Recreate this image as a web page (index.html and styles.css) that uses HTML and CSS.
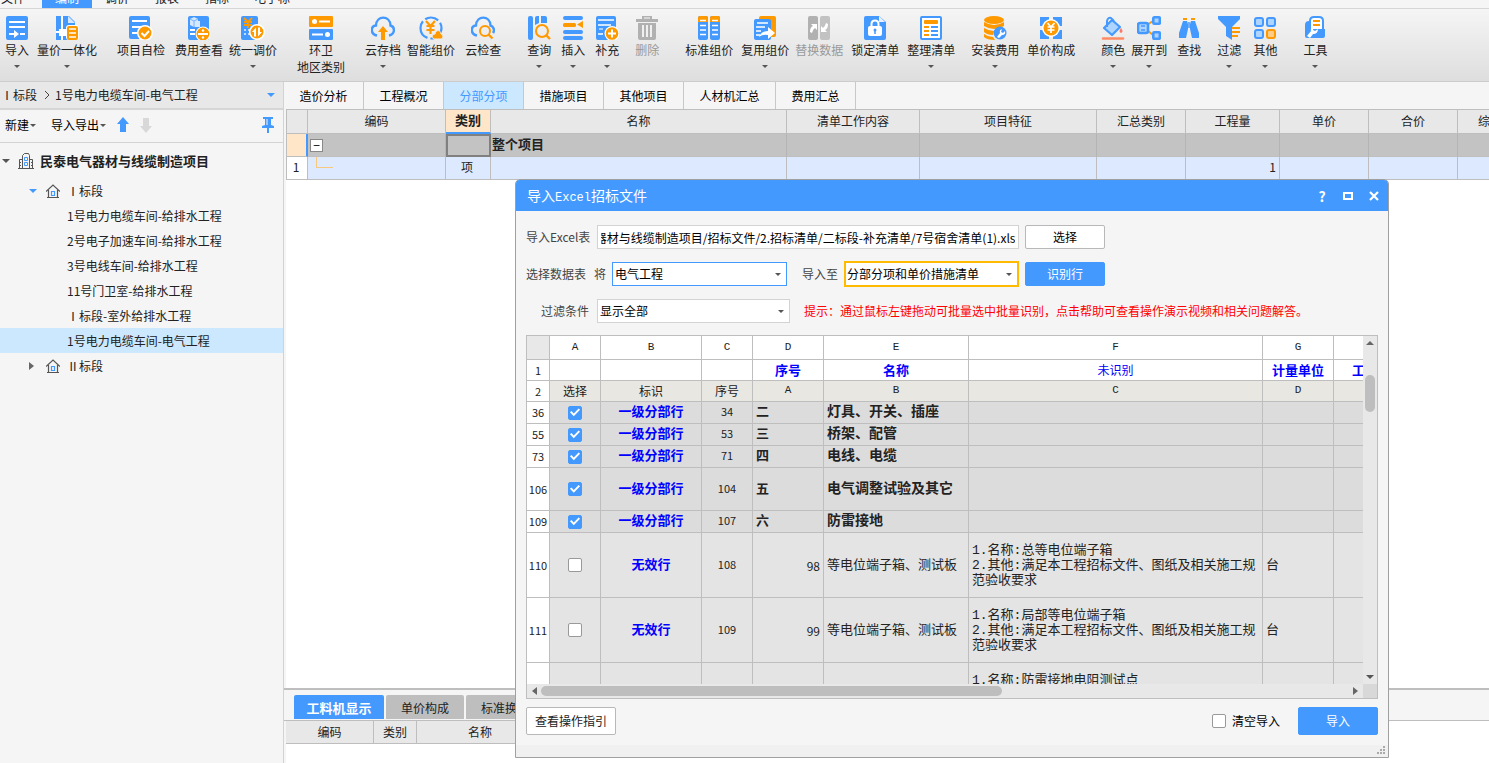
FILE: index.html
```html
<!DOCTYPE html>
<html lang="zh-CN">
<head>
<meta charset="utf-8">
<title>导入Excel招标文件</title>
<link rel="stylesheet" href="styles.css">
</head>
<body>
<div class="app">
  <nav class="menu">
    <a href="#">文件·</a><a href="#" class="active">编制</a><a href="#">调价</a><a href="#">报表</a><a href="#">指标</a><a href="#">电子标</a>
  </nav>

  <div class="ribbon">
    <button class="tool drop"><svg viewBox="0 0 24 24"><rect x="1" width="22" height="24" rx="2" fill="#49f"/><path d="M4 6h16M4 11h16M15 18h5" stroke="#fff" stroke-width="2"/><path d="M4 17h5v-3l5 4-5 4v-3H4z" fill="#fff"/></svg><span>导入</span></button>
    <button class="tool drop gap-s"><svg viewBox="0 0 24 24"><path d="M1 0h13l6 6v18H1z" fill="#49f"/><path d="M13 0l7 7h-7z" fill="#d5e8ff"/><path d="M7 0v24M1 16h11" stroke="#fff" stroke-width="2"/><rect x="4" y="13" width="7" height="7" fill="#fff"/><rect x="11" y="9" width="13" height="15" rx="3" fill="#fff"/><rect x="12" y="10" width="11" height="14" rx="2" fill="#f90"/><path d="M14 13h7M14 17h7M14 21h7" stroke="#fff" stroke-width="1.6"/></svg><span>量价一体化</span></button>
    <button class="tool gap-xl"><svg viewBox="0 0 24 24"><rect x="0" width="21" height="23" rx="2" fill="#49f"/><path d="M3 5h15M3 11h9M3 17h5" stroke="#fff" stroke-width="2"/><circle cx="16" cy="17" r="8" fill="#fff"/><circle cx="16" cy="17" r="6.5" fill="#f90"/><path d="M12.500 17l3 3 4.500-5" fill="none" stroke="#fff" stroke-width="2"/></svg><span>项目自检</span></button>
    <button class="tool gap-m"><svg viewBox="0 0 24 24"><rect x="1" width="21" height="24" rx="2" fill="#49f"/><path d="M3 3l4-2 4 2v6l-4 2-4-2zM8 5h5v6H8z" fill="#d5e8ff"/><path d="M3 3l4 2 4-2M7 5v6" stroke="#76b4ff" fill="none"/><path d="M3 14h5M3 18h5" stroke="#fff" stroke-width="2"/><circle cx="16" cy="18" r="7.500" fill="#fff"/><circle cx="16" cy="18" r="6.500" fill="#f90"/><path d="M11 18h10" stroke="#fff" stroke-width="2"/><circle cx="16" cy="14.500" r="1.200" fill="#fff"/><circle cx="16" cy="21.500" r="1.200" fill="#fff"/></svg><span>费用查看</span></button>
    <button class="tool drop gap-xs"><svg viewBox="0 0 24 24"><rect x="0" width="17" height="24" rx="2" fill="#49f"/><path d="M3 2l4 4 4-4M7 6v6M3 6h8M3 9h8" stroke="#f90" stroke-width="1.800" fill="none"/><path d="M3 14h2M7 14h3M3 18h2M7 18h2" stroke="#bfdcff" stroke-width="2"/><circle cx="16" cy="16" r="8" fill="#fff"/><circle cx="16" cy="16" r="6.500" fill="#f90"/><path d="M11 16l4-4.500v9h-2v-4.500zM21 16l-4 4.500v-9h2v4.500z" fill="#fff"/></svg><span>统一调价</span></button>
    <button class="tool gap-xl"><svg viewBox="0 0 24 24"><rect width="24" height="11" rx="1" fill="#f90"/><rect y="13" width="24" height="11" rx="1" fill="#49f"/><circle cx="5.500" cy="5.500" r="2.500" fill="#fff"/><path d="M10 5.500h11M3 18.500h11" stroke="#fff" stroke-width="2"/><circle cx="18.500" cy="18.500" r="2.500" fill="#fff"/></svg><span>环卫<br>地区类别</span></button>
    <button class="tool drop gap-xl"><svg viewBox="0 0 24 24"><path d="M6 19.500C-1 18-.5 10 5 9.500 5.500-1 19-1 19.500 9.500 24.500 11 24 18.500 18 19.500" fill="none" stroke="#49f" stroke-width="2.400"/><path d="M12 10l5 6h-3v8h-4v-8H7z" fill="#f90"/></svg><span>云存档</span></button>
    <button class="tool gap-xs"><svg viewBox="0 0 24 24"><circle cx="12" cy="12" r="10.500" fill="none" stroke="#49f" stroke-width="2.200" stroke-dasharray="17 3 20 3 14 3"/><path d="M7 5l4.500 5L16 5M11.500 10v8M7.500 10h8M7.500 14h8" stroke="#f90" stroke-width="2.200" fill="none"/><path d="M15 23c-3-1-2-5 1-5 1-5 6-4 6 0 3 1 2 5 0 5z" fill="#f90" stroke="#eee"/></svg><span>智能组价</span></button>
    <button class="tool gap-m"><svg viewBox="0 0 24 24"><path d="M6 19.500C-1 18-.5 10 5 9.500 5.500-1 19-1 19.500 9.500 22.500 10.500 24 14 22 17" fill="none" stroke="#49f" stroke-width="2.400"/><circle cx="14" cy="15" r="5" fill="none" stroke="#f90" stroke-width="2"/><path d="M17.500 18.500l4 4" stroke="#f90" stroke-width="2.400"/></svg><span>云检查</span></button>
    <button class="tool drop gap-xxl"><svg viewBox="0 0 24 24"><rect x="1" width="5" height="24" rx="2" fill="#49f"/><path d="M8 2q0-2 2-2h2v7l-4 2zM14 0h4q2 0 2 2v5h-6z" fill="#49f"/><circle cx="15" cy="15" r="6" fill="none" stroke="#f90" stroke-width="2"/><path d="M19 19l4 4" stroke="#f90" stroke-width="2.400"/></svg><span>查询</span></button>
    <button class="tool drop gap-m"><svg viewBox="0 0 24 24"><rect x="2" width="20" height="4" rx="2" fill="#49f"/><rect x="2" y="7" width="13" height="4" rx="1.500" fill="#f90"/><path d="M22 5v7l-6-3.500z" fill="#f90"/><rect x="2" y="14" width="20" height="4" rx="2" fill="#49f"/><rect x="2" y="20" width="20" height="4" rx="2" fill="#49f"/></svg><span>插入</span></button>
    <button class="tool drop gap-m"><svg viewBox="0 0 24 24"><rect x="1" width="20" height="24" rx="2" fill="#49f"/><path d="M3 4h16M3 9h13M3 18h5" stroke="#fff" stroke-width="1.600"/><path d="M4 13h4" stroke="#bfdcff" stroke-width="1.600"/><circle cx="17" cy="17.500" r="7.500" fill="#fff"/><circle cx="17" cy="17.500" r="6.300" fill="#f90"/><path d="M13 17.500h8M17 13.500v8" stroke="#fff" stroke-width="2"/></svg><span>补充</span></button>
    <button class="tool gap-n" disabled><svg viewBox="0 0 24 24"><path d="M1 3h6V0h10v3h6v3H1zM3 7h18v15q0 2-2 2H5q-2 0-2-2z" fill="#b1b1b1"/><path d="M9 2h6" stroke="#eee" stroke-width="1.200"/><path d="M8 9v12M12 9v12M16 9v12" stroke="#f0f0f0" stroke-width="2"/></svg><span>删除</span></button>
    <button class="tool gap-xxl"><svg viewBox="0 0 24 24"><rect x="1" width="10" height="24" rx="2" fill="#49f"/><rect x="13" width="10" height="24" rx="2" fill="#49f"/><path d="M1 6V2q0-2 2-2h6q2 0 2 2v4zM13 6V2q0-2 2-2h6q2 0 2 2v4z" fill="#f90"/><path d="M3 4.500h6M15 4.500h6M3 9.500h6M15 9.500h6M3 14h6M15 14h6M3 18.500h6M15 18.500h6" stroke="#fff" stroke-width="1.600"/></svg><span>标准组价</span></button>
    <button class="tool drop gap-s"><svg viewBox="0 0 24 24"><rect x="6" width="17" height="21" rx="2" fill="#f90"/><rect x="1" y="3" width="17" height="21" rx="2" fill="#49f"/><path d="M4 7h11M3 11h9M3 15h5M3 19h4" stroke="#fff" stroke-width="1.600"/><path d="M6 21q2-6 9-6v-4l7 6-7 6v-4q-5-1-9 2z" fill="#fff"/></svg><span>复用组价</span></button>
    <button class="tool gap-xs" disabled><svg viewBox="0 0 24 24"><rect x="1" width="10" height="24" rx="2" fill="#b1b1b1"/><rect x="13" width="10" height="24" rx="2" fill="#c2c2c2"/><path d="M3 16q0-5 3-6L4 8h6v6l-2-2q-2 1-3 5zM21 8q0 5-3 6l2 2h-6v-6l2 2q2-1 3-5z" fill="#fff"/></svg><span>替换数据</span></button>
    <button class="tool gap-s"><svg viewBox="0 0 24 24"><path d="M1 2q0-2 2-2h13l7 6v16q0 2-2 2H3q-2 0-2-2z" fill="#49f"/><path d="M16 0l6 6h-6z" fill="#e8f2ff"/><path d="M8.500 11V8q0-3.500 3.500-3.500T15.500 8v3" fill="none" stroke="#fff" stroke-width="2"/><rect x="5" y="10" width="14" height="10" rx="2" fill="#fff"/><circle cx="12" cy="14" r="1.500" fill="#49f"/><path d="M12 14v4" stroke="#49f" stroke-width="1.500"/></svg><span>锁定清单</span></button>
    <button class="tool drop gap-s"><svg viewBox="0 0 24 24"><rect x="2" y="1" width="20" height="22" rx="1" fill="#fff" stroke="#49f" stroke-width="2"/><rect x="5" y="4" width="14" height="4" rx="1" fill="#f90"/><path d="M5 11h5M5 15h5M5 19h5" stroke="#f90" stroke-width="1.800"/><path d="M12 11h7M12 15h7M12 19h7" stroke="#49f" stroke-width="1.800"/></svg><span>整理清单</span></button>
    <button class="tool drop gap-n"><svg viewBox="0 0 24 24"><ellipse cx="11" cy="4" rx="10" ry="4" fill="#f90"/><path d="M1 6q10 6 20 0v4q-10 6-20 0zM1 12q5 3 10 3l-1 4q-6 0-9-3zM1 18q4 3 9 3l2 3q-8 0-11-3z" fill="#f90"/><circle cx="17" cy="17" r="6.500" fill="#49f"/><path d="M14 21l3-4q-1-3 2-4l-1 3 2 1 2-2q1 4-3 4l-3 3z" fill="#fff"/></svg><span>安装费用</span></button>
    <button class="tool gap-s"><svg viewBox="0 0 24 24"><path d="M1 1h9v9H1zM14 1h9v9h-9zM1 14h9v9H1zM14 14h9v9h-9z" fill="#49f"/><circle cx="12" cy="12" r="9" fill="#fff"/><circle cx="12" cy="12" r="7.500" fill="#f90"/><path d="M8.500 7l3.500 4 3.500-4M12 11v6M8.500 11h7M8.500 14h7" fill="none" stroke="#fff" stroke-width="1.700"/></svg><span>单价构成</span></button>
    <button class="tool drop gap-xxl"><svg viewBox="0 0 24 24"><path d="M3 12L11 4l8 7-8 8z" fill="#add5ff" stroke="#49f" stroke-width="2.200" stroke-linejoin="round"/><path d="M6 11V5q1-4 4-3l3 3" fill="none" stroke="#49f" stroke-width="2"/><path d="M20 12q3 4 0 5-3-1 0-5z" fill="#f76"/><path d="M2 22.500h20" stroke="#ff8a66" stroke-width="2.600" stroke-linecap="round"/></svg><span>颜色</span></button>
    <button class="tool drop gap-xs"><svg viewBox="0 0 24 24"><path d="M10 9l6-4M10 14l6 5" stroke="#f90" stroke-width="2"/><rect x="1" y="7" width="10" height="10" rx="2" fill="#add5ff" stroke="#49f" stroke-width="2.600"/><path d="M4 10h4M4 14h4" stroke="#49f" stroke-width="1.500"/><rect x="16.300" y="1.300" width="6.500" height="6.500" rx="1" fill="#add5ff" stroke="#49f" stroke-width="2.600"/><rect x="16.300" y="16.300" width="6.500" height="6.500" rx="1" fill="#add5ff" stroke="#49f" stroke-width="2.600"/></svg><span>展开到</span></button>
    <button class="tool gap-m"><svg viewBox="0 0 24 24"><path d="M6 5h4l1 3v5l-2 9H2v-5zM14 5h4l4 12v5h-7l-2-9V8z" fill="#49f"/><path d="M6 3h4M14 3h4" stroke="#f90" stroke-width="2"/><path d="M12 6v6" stroke="#49f" stroke-width="1.500"/></svg><span>查找</span></button>
    <button class="tool drop gap-n"><svg viewBox="0 0 24 24"><path d="M1 0h22v3l-8 8v13l-6-4v-9L1 3z" fill="#49f"/><path d="M15 12h8M15 16h8M15 20h6" stroke="#f90" stroke-width="2"/></svg><span>过滤</span></button>
    <button class="tool drop gap-l"><svg viewBox="0 0 24 24"><g fill="#add5ff" stroke="#49f" stroke-width="2"><rect x="2" y="2" width="8" height="8" rx="2"/><rect x="14" y="2" width="8" height="8" rx="2"/><rect x="2" y="14" width="8" height="8" rx="2"/></g><rect x="14" y="14" width="8" height="8" rx="2" fill="#fc8" stroke="#f90" stroke-width="2"/></svg><span>其他</span></button>
    <button class="tool drop gap-xxl"><svg viewBox="0 0 24 24"><path d="M7 5q0-4 4-4h5q4 0 4 4v9H7z" fill="#fff" stroke="#49f" stroke-width="2"/><path d="M10 5h7M10 9h7" stroke="#f90" stroke-width="1.800"/><path d="M2 9q0-4 4-4v8h16v7q0 2-2 2H4q-2 0-2-2z" fill="#49f"/><path d="M4 20l4-5q-1-4 3-5l-1 4 2 1 3-2q0 5-5 5l-3 4z" fill="#fff"/></svg><span>工具</span></button>
  </div>

  <div class="workspace">
    <aside class="sidebar">
      <div class="path"><span>Ⅰ标段</span><svg class="chevron" viewBox="0 0 6 10"><path d="M1 1l4 4-4 4" fill="none" stroke="#444"/></svg><span>1号电力电缆车间-电气工程</span><i class="tri blue push"></i></div>
      <div class="side-tools">
        <button>新建<i class="tri small"></i></button>
        <button>导入导出<i class="tri small"></i></button>
        <button aria-label="上移"><svg class="arrow" viewBox="0 0 12 16"><path d="M6 0l6 7H9v8H3V7H0z" fill="#49f"/></svg></button>
        <button aria-label="下移" disabled><svg class="arrow" viewBox="0 0 12 16"><path d="M6 16l6-7H9V1H3v8H0z" fill="#d8d8d8"/></svg></button>
        <button class="push" aria-label="固定"><svg class="arrow" viewBox="0 0 12 16"><path d="M1 0h10v2H9v6l3 1v2H7v5H5v-5H0V9l3-1V2H1z" fill="#49f"/><path d="M5 2v6" stroke="#f5f5f5"/></svg></button>
      </div>
      <ul class="tree">
        <li class="root"><i class="tri"></i><svg class="building" viewBox="0 0 16 16"><g fill="none" stroke="#555"><path d="M0 15.500h16M1.500 15V6.500h3M4.500 15V2.500l2-2h4l1 2V15M11.500 6.500h3V15"/><path d="M2 9.500h1M2 12.500h1M13 9.500h1M13 12.500h1"/></g><path d="M6.500 4.500h3v3h-3zM6.500 9.500h3v3h-3z" fill="none" stroke="#49f"/></svg>民泰电气器材与线缆制造项目</li>
        <li class="branch"><i class="tri blue"></i><svg class="house" viewBox="0 0 14 14"><path d="M0 7.500L7 1l7 6.500M2.500 6v7.500h9V6M1 13.500h12" fill="none" stroke="#555" stroke-width="1.200"/><path d="M5.500 7.500h3v4h-3z" fill="none" stroke="#49f" stroke-width="1.200"/></svg>Ⅰ标段</li>
        <li class="leaf">1号电力电缆车间-给排水工程</li>
        <li class="leaf">2号电子加速车间-给排水工程</li>
        <li class="leaf">3号电线车间-给排水工程</li>
        <li class="leaf">11号门卫室-给排水工程</li>
        <li class="leaf">Ⅰ标段-室外给排水工程</li>
        <li class="leaf selected">1号电力电缆车间-电气工程</li>
        <li class="branch"><i class="tri closed"></i><svg class="house" viewBox="0 0 14 14"><path d="M0 7.500L7 1l7 6.500M2.500 6v7.500h9V6M1 13.500h12" fill="none" stroke="#555" stroke-width="1.200"/><path d="M5.500 7.500h3v4h-3z" fill="none" stroke="#49f" stroke-width="1.200"/></svg>Ⅱ标段</li>
      </ul>
    </aside>

    <main class="main">
      <nav class="tabs"><a href="#">造价分析</a><a href="#">工程概况</a><a href="#" class="active">分部分项</a><a href="#">措施项目</a><a href="#">其他项目</a><a href="#" class="wide">人材机汇总</a><a href="#">费用汇总</a></nav>
      <div class="grid-area">
        <table class="grid items">
          <colgroup><col class="w22"><col class="w138"><col class="w45"><col class="w296"><col class="w133"><col class="w177"><col class="w89"><col class="w94"><col class="w89"><col class="w89"><col class="w89"></colgroup>
          <tr><th></th><th>编码</th><th class="current">类别</th><th>名称</th><th>清单工作内容</th><th>项目特征</th><th>汇总类别</th><th>工程量</th><th>单价</th><th>合价</th><th>综合单价</th></tr>
          <tr class="total"><td class="mark"></td><td class="expander"><button aria-label="折叠">−</button></td><td class="focus"></td><td class="strong">整个项目</td><td></td><td></td><td></td><td></td><td></td><td></td><td></td></tr>
          <tr class="line"><td class="num">1</td><td><i class="elbow"></i></td><td class="mid">项</td><td></td><td></td><td></td><td></td><td class="right">1</td><td></td><td></td><td></td></tr>
        </table>
      </div>
      <section class="bottom">
        <nav class="bottom-tabs"><a href="#" class="active">工料机显示</a><a href="#">单价构成</a><a href="#">标准换算</a></nav>
        <div class="bottom-grid">
          <table class="grid">
            <colgroup><col class="w88"><col class="w43"><col class="w127"></colgroup>
            <tr><th>编码</th><th>类别</th><th>名称</th></tr>
          </table>
        </div>
      </section>
    </main>
  </div>

  <div class="dialog" role="dialog" aria-labelledby="dlg-title">
    <header class="dlg-head">
      <h1 id="dlg-title">导入<span class="latin">Excel</span>招标文件</h1>
      <button aria-label="帮助"><b>?</b></button>
      <button aria-label="最大化"><svg viewBox="0 0 10 10"><path d="M1 2h8v6H1z" fill="none" stroke="#fff" stroke-width="2"/></svg></button>
      <button aria-label="关闭"><svg viewBox="0 0 10 10"><path d="M1 1l8 8M9 1L1 9" stroke="#fff" stroke-width="2.200"/></svg></button>
    </header>
    <div class="dlg-body">
      <div class="field-row">
        <label class="lead" for="file">导入Excel表</label>
        <input id="file" class="file" type="text" value="招标项目/民泰电气器材与线缆制造项目/招标文件/2.招标清单/二标段-补充清单/7号宿舍清单(1).xls">
        <button class="btn">选择</button>
      </div>
      <div class="field-row">
        <label class="lead split" for="sheet"><span>选择数据表</span><span>将</span></label>
        <span class="pick sheet"><select id="sheet"><option>电气工程</option></select></span>
        <label class="to" for="target">导入至</label>
        <span class="pick target"><select id="target"><option>分部分项和单价措施清单</option></select></span>
        <button class="btn primary">识别行</button>
      </div>
      <div class="field-row">
        <label class="lead end" for="filter">过滤条件</label>
        <span class="pick filter"><select id="filter"><option>显示全部</option></select></span>
        <p class="hint">提示：通过鼠标左键拖动可批量选中批量识别，点击帮助可查看操作演示视频和相关问题解答。</p>
      </div>

      <div class="sheet-box">
        <div class="sheet-view">
          <table class="sheet-table">
            <colgroup><col class="w23"><col class="w51"><col class="w101"><col class="w51"><col class="w71"><col class="w145"><col class="w294"><col class="w71"><col class="w76"></colgroup>
            <tr class="letters"><th class="corner"></th><th>A</th><th>B</th><th>C</th><th>D</th><th>E</th><th>F</th><th>G</th><th>H</th></tr>
            <tr class="mapped"><th>1</th><td></td><td></td><td></td><td>序号</td><td>名称</td><td class="plain">未识别</td><td>计量单位</td><td>工程量</td></tr>
            <tr class="heads"><th>2</th><td>选择</td><td>标识</td><td>序号</td><td class="lat">A</td><td class="lat">B</td><td class="lat">C</td><td class="lat">D</td><td></td></tr>
            <tr class="section"><th>36</th><td><input type="checkbox" aria-label="选择第36行" checked></td><td class="kind">一级分部行</td><td class="digits">34</td><td class="ord">二</td><td class="name">灯具、开关、插座</td><td></td><td></td><td></td></tr>
            <tr class="section"><th>55</th><td><input type="checkbox" aria-label="选择第55行" checked></td><td class="kind">一级分部行</td><td class="digits">53</td><td class="ord">三</td><td class="name">桥架、配管</td><td></td><td></td><td></td></tr>
            <tr class="section"><th>73</th><td><input type="checkbox" aria-label="选择第73行" checked></td><td class="kind">一级分部行</td><td class="digits">71</td><td class="ord">四</td><td class="name">电线、电缆</td><td></td><td></td><td></td></tr>
            <tr class="section tall"><th>106</th><td><input type="checkbox" aria-label="选择第106行" checked></td><td class="kind">一级分部行</td><td class="digits">104</td><td class="ord">五</td><td class="name">电气调整试验及其它</td><td></td><td></td><td></td></tr>
            <tr class="section"><th>109</th><td><input type="checkbox" aria-label="选择第109行" checked></td><td class="kind">一级分部行</td><td class="digits">107</td><td class="ord">六</td><td class="name">防雷接地</td><td></td><td></td><td></td></tr>
            <tr class="detail"><th>110</th><td><input type="checkbox" aria-label="选择第110行"></td><td class="kind">无效行</td><td class="digits">108</td><td class="amount">98</td><td class="text">等电位端子箱、测试板</td><td class="text">1.名称:总等电位端子箱<br>2.其他:满足本工程招标文件、图纸及相关施工规范验收要求</td><td class="text">台</td><td></td></tr>
            <tr class="detail"><th>111</th><td><input type="checkbox" aria-label="选择第111行"></td><td class="kind">无效行</td><td class="digits">109</td><td class="amount">99</td><td class="text">等电位端子箱、测试板</td><td class="text">1.名称:局部等电位端子箱<br>2.其他:满足本工程招标文件、图纸及相关施工规范验收要求</td><td class="text">台</td><td></td></tr>
            <tr class="detail"><th></th><td></td><td></td><td></td><td></td><td></td><td class="text">1.名称:防雷接地电阻测试点<br>2.其他:满足本工程招标文件、图纸及相关施工规范验收要求</td><td></td><td></td></tr>
          </table>
        </div>
        <div class="vbar"><i class="tri up"></i><span class="vthumb"></span><i class="tri"></i></div>
        <div class="hbar"><i class="tri left"></i><span class="hthumb"></span><i class="tri closed"></i></div>
        <div class="bar-corner"></div>
      </div>

      <footer class="dlg-foot">
        <button class="btn guide">查看操作指引</button>
        <label class="clear"><input type="checkbox">清空导入</label>
        <button class="btn primary big">导入</button>
      </footer>
    </div>
    <div class="dlg-status"><svg viewBox="0 0 8 8"><path d="M6 0h2v2H6zM3 3h2v2H3zM6 3h2v2H6zM0 6h2v2H0zM3 6h2v2H3zM6 6h2v2H6z" fill="#aaa"/></svg></div>
  </div>
</div>
<script src="app.js"></script>
</body>
</html>
```

FILE: app.js
```js
// Keep the file name at the end of a long path in view.
const file = document.getElementById("file");
file.scrollLeft = file.scrollWidth;
```

FILE: styles.css
```css
* { box-sizing: border-box; }
html, body { height: 100%; margin: 0; }
body { font: 12px/18px "Noto Sans CJK SC", sans-serif; color: #222; background: #fff; overflow: hidden; }
a { color: inherit; text-decoration: none; }
button, input, select { font: inherit; color: inherit; margin: 0; }
button { background: none; border: 0; padding: 0; white-space: nowrap; }
ul, p, h1 { margin: 0; padding: 0; }
.app { position: relative; display: flex; flex-direction: column; height: 100vh; overflow: hidden; }
.push { margin-left: auto; }

.menu { display: flex; align-items: flex-end; height: 9px; flex: none; overflow: hidden; background: #f5f5f5; border-bottom: 1px solid #d6d6d6; }
.menu a { width: 50px; padding-bottom: 1px; text-align: center; flex: none; }
.menu a:first-child { width: 42px; text-align: left; padding-left: 1px; }
.menu .active { background: #49f; color: #fff; }
.menu a:last-child { width: 60px; }

.ribbon { display: flex; align-items: flex-start; height: 73px; flex: none; padding: 7px 0 0 5px; background: linear-gradient(#f5f5f5, #dedede); border-bottom: 1px solid #ccc; }
.tool { display: flex; flex-direction: column; align-items: center; flex: none; line-height: 17px; }
.tool svg { width: 24px; height: 24px; margin-bottom: 1px; }
.tool:disabled { color: #999; }
.tool.drop::after { content: ""; margin-top: 7px; border: 3px solid transparent; border-top-color: #555; border-bottom: 0; }
.gap-xs { margin-left: 6px; }
.gap-s { margin-left: 8px; }
.gap-m { margin-left: 10px; }
.gap-l { margin-left: 12px; }
.gap-n { margin-left: 16px; }
.gap-xl { margin-left: 20px; }
.gap-xxl { margin-left: 26px; }

.tri { display: inline-block; flex: none; border: 4px solid transparent; border-top-color: #555; border-bottom: 0; }
.tri.small { border-width: 3px; border-bottom: 0; vertical-align: 2px; }
.tri.blue { border-top-color: #49f; }
.tri.up { border: 4px solid transparent; border-bottom-color: #666; border-top: 0; }
.tri.closed { border: 4px solid transparent; border-left: 5px solid #666; border-right: 0; }
.tri.left { border: 4px solid transparent; border-right: 5px solid #666; border-left: 0; }

.workspace { display: flex; flex: 1; min-height: 0; }
.sidebar { width: 284px; flex: none; background: #f5f5f5; border-right: 1px solid #d3d3d3; }
.path { display: flex; align-items: center; height: 28px; padding: 0 8px 0 1px; background: #e8e8e8; border-bottom: 2px solid #d6d6d6; }
.chevron { width: 6px; height: 10px; margin: 0 5px 0 7px; }
.side-tools { display: flex; align-items: center; gap: 11px; height: 33px; padding: 0 9px 2px 5px; border-bottom: 1px solid #d3d3d3; }
.side-tools button { display: flex; align-items: center; gap: 1px; color: #000; }
.side-tools button:first-child { margin-right: 4px; }
.arrow { width: 12px; height: 16px; }
.tree { list-style: none; }
.tree li { display: flex; align-items: center; height: 25px; }
.tree .root { height: 35px; padding-left: 2px; font-size: 13px; font-weight: bold; }
.building { width: 16px; height: 16px; margin: 0 6px 0 8px; }
.tree .branch { padding-left: 29px; }
.branch .tri { margin-right: 9px; }
.branch .tri.closed { margin: 0 12px 0 0; }
.house { width: 14px; height: 14px; margin-right: 7px; }
.tree .leaf { padding-left: 67px; }
.tree .selected { background: #cce8ff; }

.main { display: flex; flex-direction: column; flex: 1; min-width: 0; background: #f5f5f5; }
.tabs { display: flex; height: 27px; flex: none; }
.tabs a { width: 80px; line-height: 28px; text-align: center; border-right: 1px solid #c8c8c8; color: #000; }
.tabs .wide { width: 92px; }
.tabs .active { background: #cce8ff; color: #49f; }
.grid-area { flex: 1; min-height: 0; margin-left: 2px; overflow: hidden; background: #fff; }
.grid { table-layout: fixed; width: 0; border-collapse: separate; border-spacing: 0; }
.grid th, .grid td { height: 23px; padding: 0 3px; border: solid #bebebe; border-width: 0 1px 1px 0; font-weight: normal; line-height: 18px; overflow: hidden; white-space: nowrap; }
.grid th { background: #e8e8e8; }
.grid td { padding: 0 3px 2px 1px; }
.items th { height: 25px; padding-bottom: 2px; border-top-width: 1px; }
.items th:first-child, .items td:first-child { border-left-width: 1px; }
.items .current { background: #ffe6c8; font-size: 13px; font-weight: bold; border-bottom: 2px solid #49f; }
.items .total td { background: #c3c3c3; border-right-color: #b4b4b4; }
.items .total .mark { background: #ffe6c8; border-right: 2px solid #49f; }
.items .total .focus { border: 2px solid #808080; }
.items .strong { font-size: 13px; font-weight: bold; }
.items .line td { background: #dce9ff; }
.items .line .num { background: #fff; text-align: center; }
.mid { text-align: center; }
.grid .right { text-align: right; }
.grid .expander { padding-bottom: 0; }
.expander button { display: block; width: 13px; height: 13px; margin-left: 1px; border: 1px solid #888; background: #fff; color: #000; line-height: 10px; }
.elbow { display: block; width: 17px; height: 11px; margin: 0 0 9px 7px; border: solid #f9c880; border-width: 0 0 1px 1px; }

.bottom { flex: none; height: 75px; border-top: 2px solid #bebebe; }
.bottom-tabs { display: flex; gap: 2px; height: 31px; padding: 5px 0 1px 10px; border-bottom: 1px solid #bebebe; }
.bottom-tabs a { width: 78px; height: 24px; line-height: 25px; text-align: center; background: #bebebe; border-radius: 2px 2px 0 0; }
.bottom-tabs .active { width: 90px; background: #49f; color: #fff; font-size: 13px; font-weight: bold; }
.bottom-grid { height: 42px; margin-left: 2px; background: #fff; }

.w22 { width: 22px; } .w23 { width: 23px; } .w43 { width: 43px; } .w45 { width: 45px; }
.w51 { width: 51px; } .w71 { width: 71px; } .w76 { width: 76px; } .w88 { width: 88px; }
.w89 { width: 89px; } .w94 { width: 94px; } .w101 { width: 101px; } .w127 { width: 127px; }
.w133 { width: 133px; } .w138 { width: 138px; } .w145 { width: 145px; } .w177 { width: 177px; }
.w294 { width: 294px; } .w296 { width: 296px; }

.dialog { position: absolute; left: 515px; top: 179px; width: 874px; background: #f5f5f5; border: 1px solid #a0a0a0; border-radius: 5px 5px 0 0; }
.dlg-head { display: flex; align-items: center; gap: 16px; height: 31px; padding: 0 9px 0 11px; background: #49f; color: #fff; border-radius: 4px 4px 0 0; }
.dlg-head h1 { flex: 1; font-size: 14px; font-weight: normal; }
.latin { font: 12px "Liberation Mono", monospace; }
.dlg-head button { width: 10px; display: flex; justify-content: center; color: #fff; font-size: 14px; }
.dlg-head svg { width: 10px; height: 10px; }
.dlg-body { padding: 14px 10px 0; }
.field-row { display: flex; align-items: center; height: 24px; margin-bottom: 13px; }
.field-row label { color: #444; }
.lead { width: 71px; flex: none; }
.lead.split { display: flex; gap: 8px; width: 86px; }
.lead.end { padding-left: 15px; }
.field-row .file { width: 422px; height: 24px; padding: 0 3px; border: 1px solid #d3d3d3; background: #fff; color: #000; }
.btn { width: 80px; height: 24px; border: 1px solid #b8b8b8; border-radius: 2px; background: #fff; color: #000; }
.field-row .btn { margin-left: 6px; }
.btn.primary { background: #49f; border-color: #49f; color: #fff; }
.pick { position: relative; display: block; width: 175px; height: 24px; border: 1px solid #49f; background: #fff; }
.pick::after { content: ""; position: absolute; right: 5px; top: 10px; border: 3px solid transparent; border-top-color: #555; border-bottom: 0; pointer-events: none; }
.pick select { display: block; width: 100%; height: 100%; padding: 0 2px; border: 0; appearance: none; background: none; color: #000; }
.pick.target { height: 26px; border: 2px solid #fb0; }
.pick.target select { padding: 0 1px; }
.pick.filter { width: 193px; border-color: #d3d3d3; }
.to { margin: 0 6px 0 15px; }
.hint { margin-left: 14px; color: #f00; white-space: nowrap; }

.sheet-box { display: grid; grid-template: 348px 14px / 1fr 14px; border: 1px solid #bebebe; margin-top: -1px; }
.sheet-view { overflow: hidden; background: #e4e4e4; }
.sheet-table { table-layout: fixed; width: 0; border-collapse: separate; border-spacing: 0; text-align: center; }
.sheet-table th, .sheet-table td { padding: 0 3px; border: solid #bebebe; border-width: 0 1px 1px 0; line-height: 15px; overflow: hidden; }
.sheet-table th { padding: 0; background: #fff; font-size: 11px; font-weight: normal; }
.sheet-table .letters th, .sheet-table .lat { font: 11px/15px "Liberation Mono", monospace; }
.letters th { height: 24px; }
.sheet-table .corner { background: #e8e8e8; }
.mapped td, .heads td { height: 21px; }
.mapped td { background: #fff; color: #00f; font-size: 13px; font-weight: bold; }
.mapped .plain { font-size: 12px; font-weight: normal; }
.heads td { background: #e8e7e2; }
.section td { height: 22px; background: #dcdcdc; }
.tall td { height: 43px; }
.detail td { height: 65px; background: #e4e4e4; }
.sheet-table .mapped td, .sheet-table .heads td, .sheet-table .digits { padding-bottom: 2px; }
.sheet-table .kind, .sheet-table .ord, .sheet-table .name { padding-bottom: 4px; }
.digits { font-size: 11px; }
.sheet-table .kind { color: #00f; font-size: 13px; font-weight: bold; }
.sheet-table .ord { text-align: left; font-size: 13px; font-weight: bold; }
.sheet-table .name { text-align: left; font-size: 14px; font-weight: bold; white-space: nowrap; }
.sheet-table .text { text-align: left; font: 13px/15px "Liberation Mono", "Noto Sans CJK SC", monospace; }
.sheet-table .amount { text-align: right; font-size: 12px; }
input[type="checkbox"] { appearance: none; display: block; width: 14px; height: 14px; margin: 0 auto; border: 1px solid #999; border-radius: 2px; background: #fff; }
input[type="checkbox"]:checked { background: #49f; border-color: #49f; }
input[type="checkbox"]:checked::after { content: ""; display: block; width: 12px; height: 12px; background: #fff; clip-path: polygon(8% 48%, 20% 38%, 40% 58%, 80% 16%, 92% 28%, 40% 82%); }
.vbar { display: flex; flex-direction: column; align-items: center; padding: 5px 0; background: #e8e8e8; }
.vthumb { width: 10px; height: 37px; margin: 30px 0 auto; border-radius: 5px; background: #bebebe; }
.hbar { display: flex; align-items: center; padding: 0 5px; background: #e8e8e8; }
.hthumb { width: 461px; height: 10px; margin: 0 auto 0 4px; border-radius: 5px; background: #bebebe; }
.bar-corner { background: #d8d8d8; }

.dlg-foot { display: flex; align-items: center; padding: 8px 0 10px; }
.dlg-foot .btn { height: 28px; }
.dlg-foot .guide { width: 90px; color: #222; }
.clear { display: flex; align-items: center; gap: 6px; margin: 0 18px 0 auto; color: #000; }
.dlg-status { display: flex; justify-content: flex-end; align-items: flex-end; height: 12px; padding: 0 3px 3px; background: #f0f0f0; }
.dlg-status svg { width: 8px; height: 8px; }
```
